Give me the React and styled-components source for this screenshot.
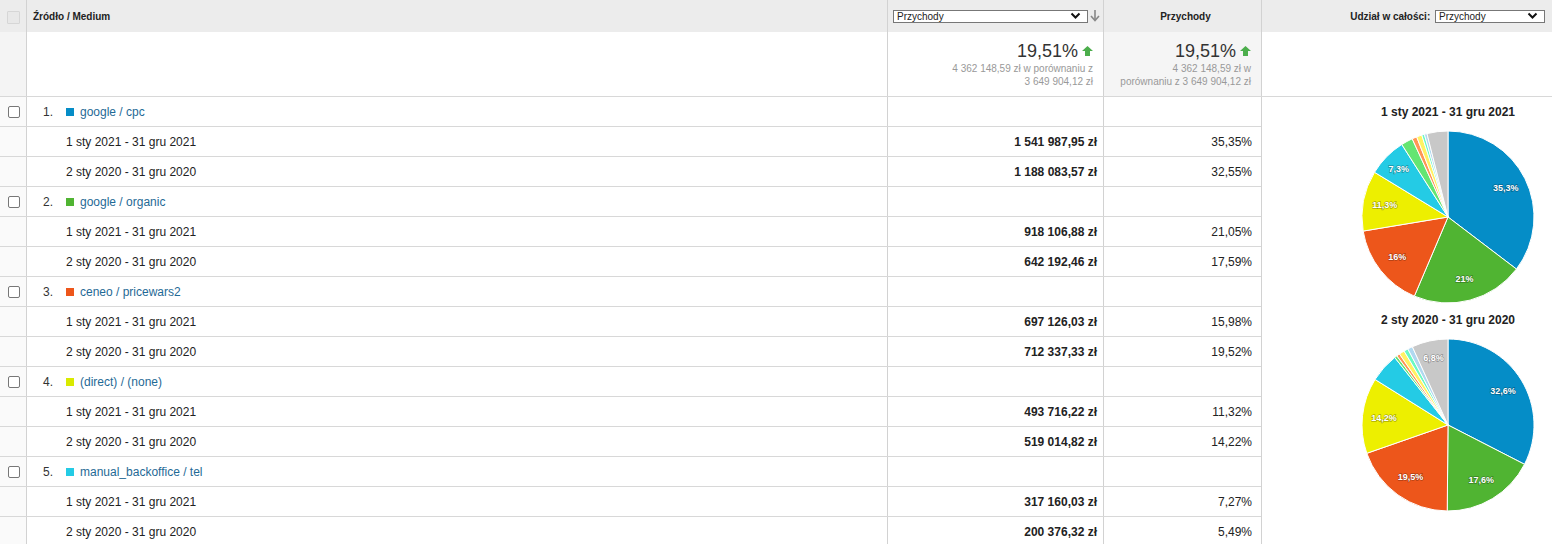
import React from "react";
import styled, { createGlobalStyle } from "styled-components";

const GlobalStyle = createGlobalStyle`
  html, body {
    margin: 0;
    padding: 0;
    background: #fff;
  }
  body {
    font-family: "Liberation Sans", Arial, sans-serif;
    color: #333;
  }
`;

const COLS = "26px 861px 216px 158px";

const rows = [
  { n: 1, name: "google / cpc", color: "#058dc7", a: ["1 541 987,95 zł", "35,35%"], b: ["1 188 083,57 zł", "32,55%"] },
  { n: 2, name: "google / organic", color: "#50b432", a: ["918 106,88 zł", "21,05%"], b: ["642 192,46 zł", "17,59%"] },
  { n: 3, name: "ceneo / pricewars2", color: "#ed561b", a: ["697 126,03 zł", "15,98%"], b: ["712 337,33 zł", "19,52%"] },
  { n: 4, name: "(direct) / (none)", color: "#d9ea00", a: ["493 716,22 zł", "11,32%"], b: ["519 014,82 zł", "14,22%"] },
  { n: 5, name: "manual_backoffice / tel", color: "#24cbe5", a: ["317 160,03 zł", "7,27%"], b: ["200 376,32 zł", "5,49%"] },
];

const pie2021 = [
  { v: 35.35, c: "#058dc7", l: "35,3%" },
  { v: 21.05, c: "#50b432", l: "21%" },
  { v: 15.98, c: "#ed561b", l: "16%" },
  { v: 11.32, c: "#edef00", l: "11,3%" },
  { v: 7.27, c: "#24cbe5", l: "7,3%" },
  { v: 2.2, c: "#64e572" },
  { v: 0.9, c: "#ff9655" },
  { v: 1.0, c: "#fff263" },
  { v: 0.5, c: "#6af9c4" },
  { v: 0.5, c: "#b0d8f0" },
  { v: 3.93, c: "#c8c8c8" },
];

const pie2020 = [
  { v: 32.55, c: "#058dc7", l: "32,6%" },
  { v: 17.59, c: "#50b432", l: "17,6%" },
  { v: 19.52, c: "#ed561b", l: "19,5%" },
  { v: 14.22, c: "#edef00", l: "14,2%" },
  { v: 5.49, c: "#24cbe5" },
  { v: 0.5, c: "#64e572" },
  { v: 0.6, c: "#ff9655" },
  { v: 1.0, c: "#fff263" },
  { v: 0.8, c: "#6af9c4" },
  { v: 0.93, c: "#b0d8f0" },
  { v: 6.8, c: "#c8c8c8", l: "6,8%" },
];

function PieChart({ data, cx = 100, cy = 96, r = 86 }) {
  let acc = 0;
  const pt = (pct, rad) => {
    const a = (pct / 100) * Math.PI * 2;
    return [cx + rad * Math.sin(a), cy - rad * Math.cos(a)];
  };
  return (
    <svg width="200" height="190" viewBox="0 0 200 190">
      {data.map((s, i) => {
        const start = acc;
        acc += s.v;
        const [x1, y1] = pt(start, r);
        const [x2, y2] = pt(acc, r);
        const large = s.v > 50 ? 1 : 0;
        return (
          <path
            key={i}
            d={`M${cx},${cy} L${x1},${y1} A${r},${r} 0 ${large} 1 ${x2},${y2} Z`}
            fill={s.c}
            stroke="#fff"
            strokeWidth="1"
          />
        );
      })}
      {(() => {
        let a2 = 0;
        return data.map((s, i) => {
          const mid = a2 + s.v / 2;
          a2 += s.v;
          if (!s.l) return null;
          const [x, y] = pt(mid, r * (s.v < 10 ? 0.8 : 0.75));
          return (
            <SliceLabel key={"l" + i} x={x} y={y + 3} textAnchor="middle">
              {s.l}
            </SliceLabel>
          );
        });
      })()}
    </svg>
  );
}

function UpArrow() {
  return (
    <svg width="11" height="10" viewBox="0 0 11 10">
      <polygon points="5.5,0 11,5 8,5 8,10 3,10 3,5 0,5" fill="#4cae4c" />
    </svg>
  );
}

function Chevron() {
  return (
    <svg width="11" height="8" viewBox="0 0 11 8">
      <polyline points="1.5,1.5 5.5,5.5 9.5,1.5" fill="none" stroke="#111" strokeWidth="2" />
    </svg>
  );
}

function SortArrow() {
  return (
    <svg width="10" height="12" viewBox="0 0 10 12">
      <line x1="5" y1="0" x2="5" y2="10" stroke="#888" strokeWidth="1.6" />
      <polyline points="1,6 5,10.5 9,6" fill="none" stroke="#888" strokeWidth="1.6" />
    </svg>
  );
}

function FakeSelect({ width }) {
  return (
    <Select $w={width}>
      <span>Przychody</span>
      <Chevron />
    </Select>
  );
}

export default function App() {
  return (
    <>
      <GlobalStyle />
      <Report>
        <HeaderRow>
          <Cell $center>
            <DisabledBox />
          </Cell>
          <HeadCell>Źródło / Medium</HeadCell>
          <HeadCell $pad="0 3px 0 5px">
            <FakeSelect width={195} />
            <SortArrow />
          </HeadCell>
          <HeadCell $justify="center">Przychody</HeadCell>
          <HeadCell $justify="flex-end" $pad="0 7px 0 0">
            Udział w całości:&nbsp;
            <FakeSelect width={110} />
          </HeadCell>
        </HeaderRow>

        <SummaryRow>
          <Cell $bg="#f4f4f4" />
          <Cell />
          <SummaryCell>
            <BigValue>
              19,51% <UpArrow />
            </BigValue>
            <SubValue>
              4 362 148,59 zł w porównaniu z
              <br />3 649 904,12 zł
            </SubValue>
          </SummaryCell>
          <SummaryCell $bg="#f5f5f5">
            <BigValue>
              19,51% <UpArrow />
            </BigValue>
            <SubValue>
              4 362 148,59 zł w
              <br />
              porównaniu z 3 649 904,12 zł
            </SubValue>
          </SummaryCell>
          <Cell />
        </SummaryRow>

        <Body>
          <TableBody>
            {rows.map((r) => (
              <React.Fragment key={r.n}>
                <BodyRow>
                  <Cell $center $bg="#fafafa">
                    <CheckBox />
                  </Cell>
                  <Cell>
                    <RowNum>{r.n}.</RowNum>
                    <Swatch $color={r.color} />
                    <SourceLink>{r.name}</SourceLink>
                  </Cell>
                  <Cell />
                  <Cell />
                </BodyRow>
                <BodyRow>
                  <Cell $bg="#fafafa" />
                  <DateCell>1 sty 2021 - 31 gru 2021</DateCell>
                  <ValueCell>{r.a[0]}</ValueCell>
                  <PctCell>{r.a[1]}</PctCell>
                </BodyRow>
                <BodyRow>
                  <Cell $bg="#fafafa" />
                  <DateCell>2 sty 2020 - 31 gru 2020</DateCell>
                  <ValueCell>{r.b[0]}</ValueCell>
                  <PctCell>{r.b[1]}</PctCell>
                </BodyRow>
              </React.Fragment>
            ))}
          </TableBody>
          <PiePanel>
            <ChartBlock>
              <ChartTitle>1 sty 2021 - 31 gru 2021</ChartTitle>
              <PieChart data={pie2021} />
              <ChartTitle>2 sty 2020 - 31 gru 2020</ChartTitle>
              <PieChart data={pie2020} />
            </ChartBlock>
          </PiePanel>
        </Body>
      </Report>
    </>
  );
}

const Report = styled.div`
  width: 1552px;
  display: flex;
  flex-direction: column;
  font-size: 12px;
`;

const HeaderRow = styled.div`
  display: grid;
  grid-template-columns: ${COLS} 1fr;
  height: 32px;
  background: #ececec;
  & > * + * {
    border-left: 1px solid #d2d2d2;
  }
`;

const Cell = styled.div`
  display: flex;
  align-items: center;
  justify-content: ${(p) => (p.$center ? "center" : "flex-start")};
  background: ${(p) => p.$bg || "transparent"};
  min-width: 0;
`;

const HeadCell = styled.div`
  display: flex;
  align-items: center;
  justify-content: ${(p) => p.$justify || "flex-start"};
  padding: ${(p) => p.$pad || "0 0 0 6px"};
  font-size: 10px;
  font-weight: bold;
  color: #222;
  gap: 2px;
`;

const DisabledBox = styled.span`
  width: 11px;
  height: 11px;
  margin-top: 2px;
  border: 1px solid #d6d6d6;
  background: #e8e8e8;
  border-radius: 1px;
`;

const Select = styled.div`
  box-sizing: border-box;
  width: ${(p) => p.$w}px;
  height: 13px;
  border: 1px solid #777;
  background: #fff;
  display: flex;
  align-items: center;
  justify-content: space-between;
  padding: 0 6px 0 3px;
  font-size: 10px;
  font-weight: normal;
  color: #222;
  line-height: 11px;
`;

const SummaryRow = styled.div`
  display: grid;
  grid-template-columns: ${COLS} 1fr;
  height: 65px;
  box-sizing: border-box;
  border-bottom: 1px solid #d8d8d8;
  & > * + * {
    border-left: 1px solid #d2d2d2;
  }
`;

const SummaryCell = styled.div`
  background: ${(p) => p.$bg || "#fff"};
  display: flex;
  flex-direction: column;
  align-items: flex-end;
  padding: 8px 10px 0 0;
  text-align: right;
`;

const BigValue = styled.div`
  display: flex;
  align-items: center;
  gap: 4px;
  font-size: 18px;
  line-height: 22px;
  color: #333;
`;

const SubValue = styled.div`
  font-size: 10px;
  line-height: 13px;
  color: #999;
`;

const Body = styled.div`
  display: flex;
`;

const TableBody = styled.div`
  display: flex;
  flex-direction: column;
`;

const BodyRow = styled.div`
  display: grid;
  grid-template-columns: ${COLS};
  height: 30px;
  box-sizing: border-box;
  border-bottom: 1px solid #d8d8d8;
  & > * + * {
    border-left: 1px solid #d2d2d2;
  }
`;

const CheckBox = styled.span`
  box-sizing: border-box;
  width: 12px;
  height: 12px;
  border: 1px solid #777;
  border-radius: 2px;
  background: #fff;
  margin-left: 1px;
`;

const RowNum = styled.span`
  width: 26px;
  text-align: right;
  color: #333;
`;

const Swatch = styled.span`
  width: 8px;
  height: 8px;
  background: ${(p) => p.$color};
  margin: 0 6px 0 13px;
`;

const SourceLink = styled.span`
  color: #1f6a96;
`;

const DateCell = styled.div`
  display: flex;
  align-items: center;
  padding-left: 39px;
  color: #222;
`;

const ValueCell = styled.div`
  display: flex;
  align-items: center;
  justify-content: flex-end;
  padding-right: 6px;
  font-weight: bold;
  color: #222;
`;

const PctCell = styled.div`
  display: flex;
  align-items: center;
  justify-content: flex-end;
  padding-right: 9px;
  color: #222;
`;

const PiePanel = styled.div`
  flex: 1;
  border-left: 1px solid #d2d2d2;
  display: flex;
  justify-content: flex-end;
  padding: 6px 4px 0 0;
`;

const ChartBlock = styled.div`
  width: 200px;
  display: flex;
  flex-direction: column;
  align-items: center;
`;

const ChartTitle = styled.div`
  font-size: 12px;
  font-weight: bold;
  line-height: 18px;
  color: #222;
`;

const SliceLabel = styled.text`
  font-family: "Liberation Sans", Arial, sans-serif;
  font-size: 9px;
  font-weight: bold;
  fill: #fff;
  stroke: rgba(0, 0, 0, 0.3);
  stroke-width: 1.3px;
  paint-order: stroke;
`;
